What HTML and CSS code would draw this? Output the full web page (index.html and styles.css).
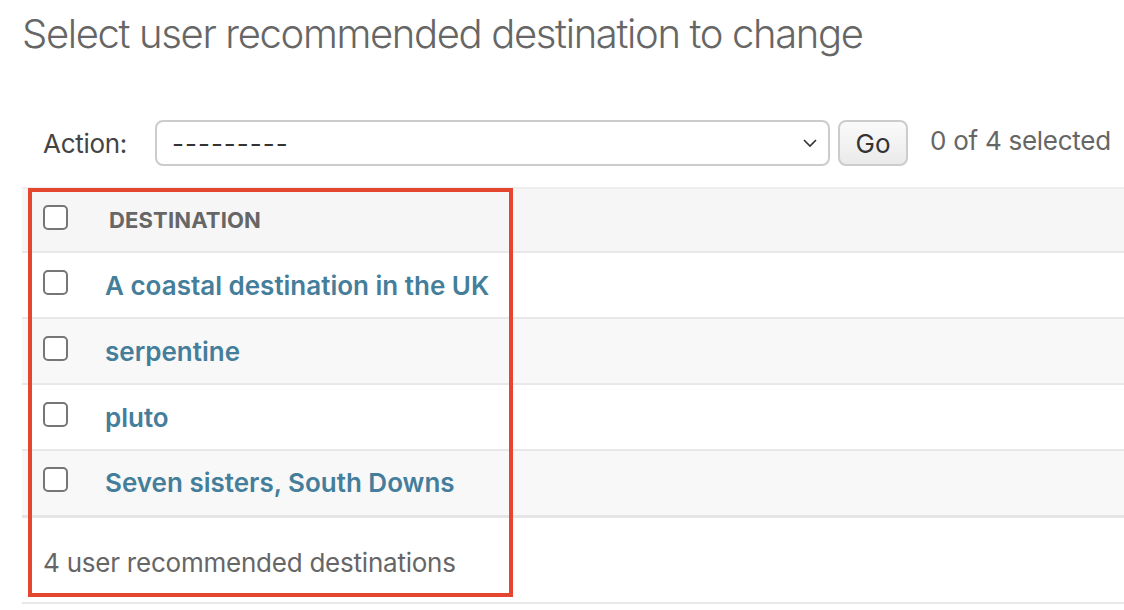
FILE: index.html
```html
<!DOCTYPE html>
<html lang="en">
<head>
<meta charset="utf-8">
<title>Select user recommended destination to change</title>
<link rel="stylesheet" href="styles.css">
</head>
<body>
<div class="content">
  <h1 class="title">Select user recommended destination to change</h1>
  <div class="actions">
    <label class="action-label">Action:</label>
    <div class="select">
      <span class="select-value">---------</span>
      <svg class="chevron" width="16" height="10" viewBox="0 0 16 10"><path d="M2 2 L8 8 L14 2" fill="none" stroke="#333" stroke-width="1.6"/></svg>
    </div>
    <button class="go">Go</button>
    <span class="counter">0 of 4 selected</span>
  </div>
  <div class="changelist">
    <table class="results">
      <thead>
        <tr>
          <th class="cb-cell"><input type="checkbox" class="cb"></th>
          <th class="col-head">DESTINATION</th>
        </tr>
      </thead>
      <tbody>
        <tr class="row1"><td class="cb-cell"><input type="checkbox" class="cb"></td><td class="name"><a href="#">A coastal destination in the UK</a></td></tr>
        <tr class="row2"><td class="cb-cell"><input type="checkbox" class="cb"></td><td class="name"><a href="#">serpentine</a></td></tr>
        <tr class="row1"><td class="cb-cell"><input type="checkbox" class="cb"></td><td class="name"><a href="#">pluto</a></td></tr>
        <tr class="row2 last"><td class="cb-cell"><input type="checkbox" class="cb"></td><td class="name"><a href="#">Seven sisters, South Downs</a></td></tr>
      </tbody>
    </table>
    <p class="paginator">4 user recommended destinations</p>
    <div class="highlight"></div>
  </div>
</div>
</body>
</html>
```
FILE: styles.css
```css
html, body {
  margin: 0;
  padding: 0;
  background: #fff;
  overflow: hidden;
}
body {
  font-family: Inter, Roboto, "Liberation Sans", sans-serif;
  color: #333;
}
.content {
  padding-left: 22px;
}
.title {
  margin: 10px 0 0 0;
  font-size: 40px;
  line-height: 48px;
  font-weight: 300;
  color: #666;
  letter-spacing: -1.35px;
}
.actions {
  display: flex;
  align-items: center;
  height: 46px;
  margin-top: 62px;
  padding-left: 21px;
}
.action-label {
  font-size: 26px;
  color: #444;
  width: 112px;
  letter-spacing: -0.3px;
}
.select {
  width: 675px;
  height: 46px;
  box-sizing: border-box;
  border: 2px solid #ccc;
  border-radius: 8px;
  display: flex;
  align-items: center;
  justify-content: space-between;
  padding: 0 10px 0 15px;
  background: #fff;
}
.select-value {
  font-size: 26px;
  color: #333;
  letter-spacing: 1px;
}
.go {
  margin-left: 8px;
  width: 70px;
  height: 46px;
  box-sizing: border-box;
  border: 2px solid #ccc;
  border-radius: 8px;
  background: linear-gradient(#fafafa, #eaeaea);
  font-family: inherit;
  font-size: 26px;
  color: #333;
  padding: 0;
}
.counter {
  margin-left: 22px;
  font-size: 26px;
  color: #666;
  position: relative;
  top: -3px;
  letter-spacing: -0.27px;
}
.changelist {
  position: relative;
  margin-top: 21px;
}
.results {
  width: 100%;
  border-collapse: collapse;
  border-top: 2px solid #eee;
}
.results thead tr {
  background: #f6f6f6;
  height: 64px;
}
.results tr {
  border-bottom: 2px solid #e8e8e8;
}
.results tbody tr {
  height: 66px;
}
.row1 { background: #fff; }
.row2 { background: #f8f8f8; }
.results tr.last { border-bottom: 3px solid #e5e5e5; }
.cb-cell {
  width: 62px;
  padding: 0 0 0 21px;
  text-align: left;
  vertical-align: middle;
}
.cb {
  appearance: none;
  -webkit-appearance: none;
  display: block;
  margin: 0;
  width: 25px;
  height: 25px;
  border: 2px solid #767676;
  border-radius: 5px;
  background: #fff;
  position: relative;
  top: -3px;
}
.col-head {
  text-align: left;
  padding: 0 0 0 4px;
  font-size: 22px;
  font-weight: 700;
  color: #666;
  letter-spacing: 0.15px;
}
.name {
  padding: 0;
  font-size: 26px;
  font-weight: 600;
}
.name a {
  color: #447e9b;
  text-decoration: none;
}
.paginator {
  margin: 0;
  height: 86px;
  box-sizing: border-box;
  padding: 29px 0 0 21px;
  font-size: 26px;
  color: #666;
  border-bottom: 2px solid #e8e8e8;
  letter-spacing: -0.23px;
}
.highlight {
  position: absolute;
  left: 6px;
  top: 1px;
  width: 485px;
  height: 409px;
  box-sizing: border-box;
  border: 4px solid #e5462f;
  pointer-events: none;
}
```
